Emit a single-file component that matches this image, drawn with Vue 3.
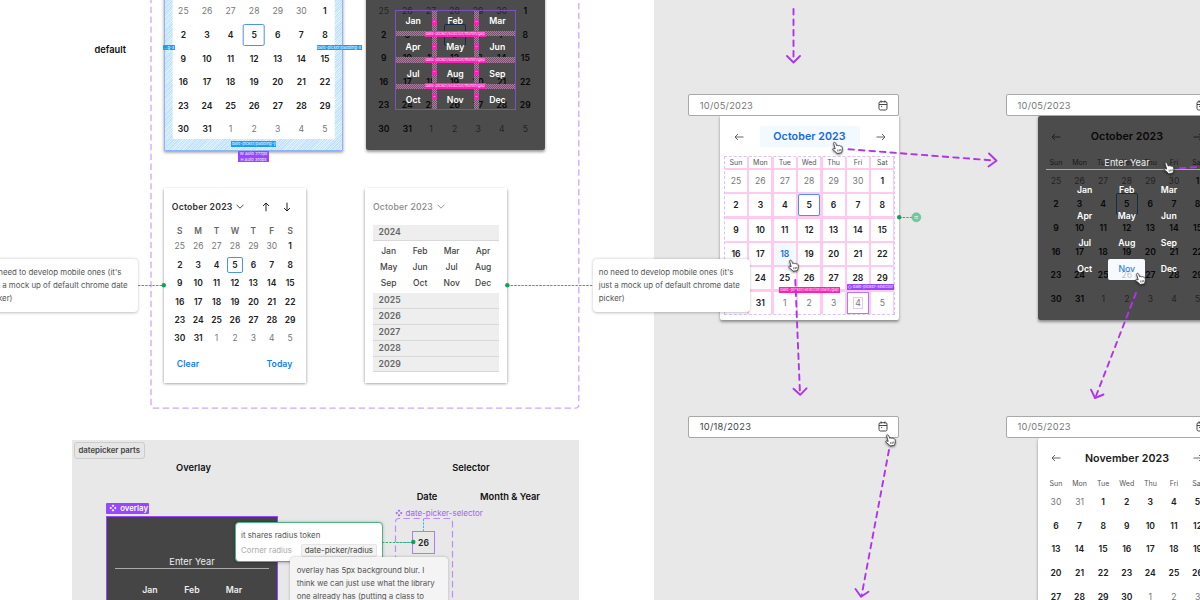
<script setup>
const dayNames = ['Sun', 'Mon', 'Tue', 'Wed', 'Thu', 'Fri', 'Sat']
const letters = ['S', 'M', 'T', 'W', 'T', 'F', 'S']
const months = ['Jan', 'Feb', 'Mar', 'Apr', 'May', 'Jun', 'Jul', 'Aug', 'Sep', 'Oct', 'Nov', 'Dec']

function buildDays(prevStart, prevEnd, last) {
  const days = []
  for (let n = prevStart; n <= prevEnd; n++) days.push({ n, out: true })
  for (let n = 1; n <= last; n++) days.push({ n, out: false })
  for (let n = 1; days.length < 42; n++) days.push({ n, out: true })
  return days
}
const october = buildDays(25, 30, 31)
const november = buildDays(30, 31, 30)

const calendars = [
  { id: 'spaced', days: october, today: 5 },
  { id: 'months', days: october, today: 5, overlay: true, measured: true },
  { id: 'gaps', title: 'October 2023', days: october, today: 5, hover: 18 },
  { id: 'year', title: 'October 2023', days: october, today: 5, overlay: true, enterYear: true },
  { id: 'next', title: 'November 2023', days: november },
]
const inputs = [
  { id: 'in-a', text: '10/05/2023' },
  { id: 'in-b', text: '10/05/2023' },
  { id: 'in-c', text: '10/18/2023', filled: true },
  { id: 'in-d', text: '10/05/2023' },
]
const years = ['2025', '2026', '2027', '2028', '2029']

const arrows = [
  { line: 'M793.5 9V61', head: 'M787 56L793.5 62.5L800 56' },
  { line: 'M848.5 149.2L994 160.5', head: 'M989 153.5L996.5 160.8L988.5 166.5' },
  { line: 'M795.3 280L800 394', head: 'M793.5 388.7L800.2 394.8L806.5 388.3' },
  { line: 'M1136 293L1096 396', head: 'M1091 389.7L1095 398L1103.5 394.5' },
  { line: 'M889 450L861.5 596', head: 'M855.5 589L861 596.7L868.5 591.7' },
  { line: 'M1180 168.3L1204 166.5', head: '' },
]
const cursors = [[832, 141.5], [788, 259.3], [1163.5, 161.7], [1135, 272.5], [885, 434]]
</script>

<template>
  <main class="canvas">
    <div class="board"></div>

    <svg class="layer" viewBox="0 0 1200 600">
      <path class="frame-line" d="M151 -3V404.500Q151 408.200 155 408.200H575Q578.800 408.200 578.800 404.500V-3" />
    </svg>
    <span class="label row-name">default</span>

    <section v-for="c in calendars" :key="c.id" class="calendar" :class="c.id">
      <header v-if="c.title" class="cal-head">
        <svg class="arrow" viewBox="0 0 10 8"><path d="M9.500 4H1M4 1L1 4L4 7" /></svg>
        <strong>{{ c.title }}</strong>
        <svg class="arrow" viewBox="0 0 10 8"><path d="M.5 4H9M6 1L9 4L6 7" /></svg>
      </header>
      <div class="grid">
        <template v-if="c.title">
          <span v-for="d in dayNames" :key="d" class="dow">{{ d }}</span>
        </template>
        <span
          v-for="(d, i) in c.days"
          :key="i"
          class="day"
          :class="{ out: d.out, today: !d.out && d.n === c.today, hover: !d.out && d.n === c.hover, picked: c.id === 'gaps' && i === 40 }"
        ><i>{{ d.n }}</i></span>
      </div>
      <div v-if="c.overlay" class="overlay">
        <div v-if="c.enterYear" class="enter-year">Enter Year</div>
        <div class="month-grid">
          <span v-for="m in months" :key="m" :class="{ chosen: c.enterYear && m === 'Nov' }">
            {{ m }}<em v-if="c.enterYear && m === 'Nov'">26</em>
          </span>
          <template v-if="c.measured">
            <b v-for="n in 2" :key="'c' + n" class="gap-col" :class="'gc' + n"><u v-for="k in 4" :key="k">–</u></b>
            <b v-for="n in 3" :key="'r' + n" class="gap-row" :class="'gr' + n"><u>date-picker/selector/month/gap</u></b>
          </template>
        </div>
      </div>
    </section>

    <span class="tag blue tag-left">...g-x</span>
    <span class="tag blue tag-right">date-picker/padding-x</span>
    <span class="tag blue tag-bottom">date-picker/padding-y</span>
    <span class="tag violet tag-size">W Auto 272px<br />H Auto 310px</span>
    <span class="tag pink tag-gap">date-picker/selector/date/gap</span>
    <span class="tag violet tag-selector">◇ date-picker-selector</span>

    <section class="mobile mobile-days">
      <header>
        <strong>October 2023</strong>
        <svg class="chev" viewBox="0 0 8 5"><path d="M.5 .7L4 4.200L7.500 .7" /></svg>
        <svg class="vert" viewBox="0 0 8 10"><path d="M4 9.300V1M1 4L4 1L7 4" /></svg>
        <svg class="vert" viewBox="0 0 8 10"><path d="M4 .7V9M1 6L4 9L7 6" /></svg>
      </header>
      <div class="mgrid">
        <span v-for="(l, i) in letters" :key="l + i" class="letter">{{ l }}</span>
        <span v-for="(d, i) in october" :key="i" :class="{ out: d.out, today: !d.out && d.n === 5 }">{{ d.n }}</span>
      </div>
      <footer><span>Clear</span><span>Today</span></footer>
    </section>

    <section class="mobile mobile-years">
      <header>
        <strong>October 2023</strong>
        <svg class="chev" viewBox="0 0 8 5"><path d="M.5 .7L4 4.200L7.500 .7" /></svg>
      </header>
      <div class="year">2024</div>
      <div class="year-months"><span v-for="m in months" :key="m">{{ m }}</span></div>
      <div v-for="y in years" :key="y" class="year">{{ y }}</div>
    </section>

    <section class="parts"></section>
    <span class="chip">datepicker parts</span>
    <span class="label l-overlay">Overlay</span>
    <span class="label l-selector">Selector</span>
    <span class="label l-date">Date</span>
    <span class="label l-month">Month &amp; Year</span>

    <span class="component-tag">
      <svg viewBox="0 0 10 10"><path d="M5 .5L6.700 2.200L5 3.900L3.300 2.200ZM5 6.100L6.700 7.800L5 9.500L3.300 7.800ZM2.200 3.300L3.900 5L2.200 6.700L.5 5ZM7.800 3.300L9.500 5L7.800 6.700L6.100 5Z" /></svg>overlay
    </span>
    <div class="part-overlay">
      <div class="enter-year">Enter Year</div>
      <div class="part-months"><span>Jan</span><span>Feb</span><span>Mar</span></div>
    </div>
    <span class="component-tag plain">
      <svg viewBox="0 0 10 10"><path d="M5 .5L6.700 2.200L5 3.900L3.300 2.200ZM5 6.100L6.700 7.800L5 9.500L3.300 7.800ZM2.200 3.300L3.900 5L2.200 6.700L.5 5ZM7.800 3.300L9.500 5L7.800 6.700L6.100 5Z" /></svg>date-picker-selector
    </span>
    <svg class="layer" viewBox="0 0 1200 600">
      <path class="set-line" d="M395.500 602V522Q395.500 518.500 399 518.500H449Q452.500 518.500 452.500 522V602" />
      <path class="cyan-line" d="M423.500 519V531M396 542.500H413" />
      <path class="green-line" d="M382 542.500H413M138 285.500H164M507 285.500H593M899 217.500H912" />
      <circle cx="163.800" cy="285.200" r="2.200" class="dot" />
      <circle cx="507.300" cy="285.200" r="2.200" class="dot" />
      <circle cx="899.200" cy="217.300" r="2.200" class="dot" />
    </svg>
    <div class="selector-cell">26</div>
    <svg class="layer" viewBox="0 0 1200 600">
      <circle cx="413.300" cy="542" r="2.200" class="dot" />
      <circle cx="916.300" cy="217.300" r="4.500" class="bubble" />
      <path class="bubble-mark" d="M914.500 216.500H918.100M914.500 218.200H918.100" />
    </svg>

    <aside class="note radius-note">
      <p>it shares radius token</p>
      <p class="token"><span>Corner radius</span><b>date-picker/radius</b></p>
    </aside>
    <aside class="note blur-note">overlay has 5px background blur. I<br />think we can just use what the library<br />one already has (putting a class to</aside>

    <div v-for="f in inputs" :key="f.id" class="input" :class="[f.id, { filled: f.filled }]">
      <span>{{ f.text }}</span>
      <svg viewBox="0 0 10 11"><path d="M1 3.200Q1 1.700 2.500 1.700H7.500Q9 1.700 9 3.200V8.400Q9 10 7.500 10H2.500Q1 10 1 8.400ZM1 4.500H9M3.100 .4V2.600M6.900 .4V2.600M3 6.400H4.200" /></svg>
    </div>

    <svg class="layer" viewBox="0 0 1200 600">
      <g v-for="(a, i) in arrows" :key="i" class="flow">
        <path class="flow-line" :d="a.line" /><path :d="a.head" />
      </g>
    </svg>

    <aside class="note mobile-note note-a">no need to develop mobile ones (it's<br />just a mock up of default chrome date<br />picker)</aside>
    <aside class="note mobile-note note-b">no need to develop mobile ones (it's<br />just a mock up of default chrome date<br />picker)</aside>

    <svg class="layer" viewBox="0 0 1200 600">
      <g v-for="(p, i) in cursors" :key="i" class="hand" :transform="`translate(${p[0]} ${p[1]})`">
        <path d="M1.600 1.800Q1.700 .6 2.800 .9Q3.500 1.100 3.900 2.300L4.700 4.300Q5.700 3.500 6.500 4.300Q7.700 3.700 8.300 4.600Q9.500 4.200 10 5.300Q10.700 7.500 10.100 9.300L9.300 11.300L5 12L3.800 10.400L.9 8.300Q.2 7.300 1.300 6.900L3.200 7.400Z" />
        <path class="knuckle" d="M5.600 8.100L5.900 10M7.200 7.800L7.400 9.700M8.700 7.600L8.700 9.300" />
      </g>
    </svg>
  </main>
</template>

<style>
html, body { margin: 0; overflow: hidden; }
</style>

<style scoped>
.canvas {
  position: relative; width: 1200px; height: 600px; overflow: hidden; background: #fff;
  font-family: Inter, "Liberation Sans", sans-serif; color: #202020;
}
.canvas, .canvas * { box-sizing: border-box; }
.canvas p { margin: 0; }
.layer { position: absolute; inset: 0; width: 1200px; height: 600px; fill: none; pointer-events: none; }
.board { position: absolute; left: 653.5px; top: 0; right: 0; bottom: 0; background: #e8e8e8; }
.parts { position: absolute; left: 72px; top: 439.500px; width: 507px; bottom: 0; background: #e8e8e8; }
.frame-line { stroke: #cda6ff; stroke-width: 1.300; stroke-dasharray: 6.300 3.500; }
.set-line { stroke: #bd8cfb; stroke-width: 1.200; stroke-dasharray: 6.500 3.500; }
.cyan-line { stroke: #41b5e8; stroke-width: 1; stroke-dasharray: 2.200 1.200; }
.green-line { stroke: #38ab73; stroke-width: 1; stroke-dasharray: 2.400 1.200; }
.dot { fill: #0fa359; }
.bubble { fill: #73c8a0; stroke: #5bbd8e; stroke-width: .6; }
.bubble-mark { stroke: #e9f7f0; stroke-width: .8; }
.flow { stroke: #b034ec; stroke-width: 1.900; stroke-linecap: round; stroke-linejoin: round; }
.flow-line { stroke-dasharray: 5.500 5; }
.hand { fill: #fff; stroke: #333; stroke-width: .8; filter: drop-shadow(0 1.200px 1px rgba(0, 0, 0, .5)); }
.knuckle { fill: none; stroke-width: .7; }

.label { position: absolute; transform: translate(-50%, -50%); font-size: 9.300px; line-height: 12px; font-weight: 600; color: #111; white-space: nowrap; }
.row-name { left: 110.300px; top: 49.500px; }
.l-overlay { left: 193.500px; top: 468px; }
.l-selector { left: 471px; top: 468px; }
.l-date { left: 427px; top: 497px; }
.l-month { left: 510px; top: 497px; }

.calendar { position: absolute; width: 179px; background: #fff; border-radius: 2px; box-shadow: 0 1.500px 3px rgba(0, 0, 0, .4); }
.grid { display: grid; grid-template-columns: repeat(7, 22px); column-gap: 1.600px; row-gap: 1.600px; }
.day { display: flex; align-items: center; justify-content: center; height: 22px; font-size: 8.600px; font-weight: 600; color: #202020; letter-spacing: .05px; border-radius: 2px; }
.day i { font-style: normal; }
.day.out { font-weight: 400; color: #777; }
.today { border: 1px solid #4a92ee; }
.dow { height: 10.500px; font-size: 7px; line-height: 10.500px; text-align: center; color: #555; }
.cal-head { height: 41px; display: flex; align-items: center; justify-content: space-between; padding: 0 13.500px; }
.cal-head strong { font-size: 10.700px; font-weight: 600; letter-spacing: .05px; }
.arrow { width: 10px; height: 8px; fill: none; stroke: #555; stroke-width: .9; }

.spaced { left: 164.300px; top: -53px; height: 203.500px; padding: 52.400px 8px 12px; border: 1px solid #8fb4f7; border-radius: 0; background: repeating-linear-gradient(135deg, #e1f2ff 0 .9px, #bfe1ff .9px 1.800px); }
.spaced .grid { background: #fff; width: 162.500px; height: 139px; margin-left: -.6px; align-content: start; padding-left: 0; column-gap: 1.600px; transform: translateX(-.3px); }
.months { left: 365.600px; top: -53px; width: 179.200px; height: 203px; padding: 53px 6.500px 0 7.200px; }
.gaps { left: 720px; top: 116px; height: 203.500px; padding: 0 5px; border-radius: 0 0 2px 2px; }
.gaps .cal-head { padding: 0 8.500px; }
.gaps .cal-head strong { width: 100px; height: 21px; line-height: 21px; text-align: center; background: #f2f9ff; color: #1769e0; border-radius: 2px; }
.gaps .grid { width: 168.500px; gap: 2.400px; outline: .5px dashed #d9c2fb; background: #ffc9f0; }
.gaps .dow, .gaps .day { background: #fff; border-radius: 0; }
.gaps .dow { line-height: 11.500px; }
.gaps .day.today { border-radius: 2px; }
.gaps .day.hover { background: #f2f9ff; color: #1769e0; }
.gaps .day.picked { border: 1px solid #b179f7; }
.gaps .picked i { border: .5px solid #e0cdfb; padding: 0 1px; }
.year, .next { left: 1037.500px; }
.calendar.year { top: 116px; height: 203.500px; }
.calendar.next { top: 437.500px; height: 203.500px; }
.calendar.year .grid, .next .grid { padding: .7px 7.500px 0; }

.overlay { position: absolute; inset: 0; background: rgba(0, 0, 0, .7); border-radius: 2px; }
.enter-year { color: #eee; font-size: 9.200px; line-height: 13px; text-align: center; border-bottom: 1px solid #aaa; letter-spacing: .05px; }
.year .enter-year { margin: 40px 8px 0; height: 13.500px; }
.month-grid { position: relative; display: grid; width: 121px; grid-template-columns: repeat(3, 36.800px); column-gap: 5.300px; row-gap: 5.300px; }
.month-grid > span { position: relative; height: 21px; line-height: 21px; text-align: center; font-size: 8.700px; font-weight: 600; color: #fff; border-radius: 2px; }
.month-grid > .chosen { color: #2f80ed; background: #f6faff; font-weight: 500; }
.chosen em { position: absolute; left: 0; right: 0; top: 5.500px; font-style: normal; color: rgba(0, 0, 0, .22); }
.year .month-grid { margin: 10.700px 0 0 28.800px; }
.months .month-grid { margin: 63px 0 0 29.200px; }
.months .month-grid > span { line-height: 22.400px; }
.months .month-grid::after { content: ""; position: absolute; inset: 0; border: 1px solid #7d4fc0; }
.gap-col, .gap-row { position: absolute; background: repeating-conic-gradient(#b278a2 0 25%, #6d5268 0 50%) 0 0 / 2px 2px; }
.gap-col { top: 0; bottom: 0; width: 5.500px; }
.gc1 { left: 36.800px; }
.gc2 { left: 78.900px; }
.gap-row { left: 0; right: 0; height: 5.300px; display: flex; justify-content: center; align-items: center; }
.gr1 { top: 21px; }
.gr2 { top: 47.300px; }
.gr3 { top: 73.600px; }
.gap-col { display: flex; flex-direction: column; justify-content: space-around; align-items: center; }
.gap-col u { width: 5.500px; height: 6px; background: #fb21b8; color: #ffc4ed; font-size: 4px; line-height: 5px; text-align: center; text-decoration: none; }
.gap-row u { background: #fb21b8; color: #ffd6f2; font-size: 3.900px; line-height: 6px; padding: 0 1px; text-decoration: none; font-weight: 500; white-space: nowrap; }

.tag { position: absolute; font-size: 4.100px; line-height: 5.800px; text-align: center; white-space: nowrap; font-weight: 500; border-radius: .5px; }
.blue { background: #1b9cf8; color: #dff1ff; height: 5.800px; }
.violet { background: #9747ff; color: #eee0ff; }
.pink { background: #fb21b8; color: #ffd0f0; }
.tag-left { left: 163px; top: 44.600px; width: 12px; }
.tag-right { left: 316.600px; top: 44.600px; width: 45px; }
.tag-bottom { left: 231.300px; top: 141px; width: 45px; }
.tag-size { left: 238px; top: 151px; width: 31px; height: 11px; line-height: 5.500px; }
.tag-gap { left: 779px; top: 286.700px; width: 61px; height: 6px; }
.tag-selector { left: 847px; top: 284.300px; width: 46.500px; height: 6px; font-size: 4.100px; }

.mobile { position: absolute; top: 188px; width: 142.500px; height: 194.500px; background: #fff; box-shadow: 0 1.300px 3px rgba(0, 0, 0, .45); }
.mobile header { display: flex; align-items: center; height: 37px; padding-left: 8px; }
.mobile strong { font-size: 8.700px; font-weight: 600; letter-spacing: .2px; color: #333; }
.chev { width: 8px; height: 5px; margin-left: 3.500px; fill: none; stroke: #333; stroke-width: .9; }
.vert { width: 8px; height: 10px; margin-left: 18.300px; fill: none; stroke: #222; stroke-width: 1; }
.vert + .vert { margin-left: 13px; }
.mobile-days { left: 163.800px; }
.mobile-years { left: 364.900px; }
.mgrid { display: grid; grid-template-columns: repeat(7, 16px); gap: 2.400px; padding: .3px 0 0 8px; }
.mgrid span { height: 16px; display: flex; align-items: center; justify-content: center; font-size: 8.500px; font-weight: 600; border-radius: 2px; }
.mgrid .letter { height: 10.700px; color: #666; font-size: 8.300px; }
.mgrid .out { font-weight: 400; color: #777; }
.mobile footer { display: flex; justify-content: space-between; padding: 12px 14px 0 13px; color: #137fed; font-size: 8.700px; line-height: 12px; font-weight: 600; }
.mobile-years strong { font-weight: 500; color: #888; }
.mobile-years .chev { stroke: #888; }
.mobile-years .year { position: static; margin: 0 8.300px 0 8px; height: 15.800px; padding-left: 5.500px; line-height: 15.600px; background: #eee; border-bottom: 1px solid #d8d8d8; font-size: 8.700px; font-weight: 600; color: #666; letter-spacing: .1px; }
.year-months { display: grid; grid-template-columns: repeat(4, 31.500px); grid-auto-rows: 15.800px; margin: 3.500px 8px 1.700px; text-align: center; line-height: 15.800px; font-size: 8.500px; font-weight: 500; color: #444; }

.chip { position: absolute; left: 74px; top: 441.500px; width: 70.500px; height: 17px; border: 1px solid #ccc; border-radius: 3px; background: #e6e6e6; font-size: 7.800px; line-height: 15px; font-weight: 600; text-align: center; color: #444; white-space: nowrap; }
.component-tag { position: absolute; left: 106.200px; top: 502.500px; width: 42.500px; height: 11.500px; padding-left: 3px; display: flex; align-items: center; gap: 3px; font-size: 7.800px; font-weight: 600; color: #fff; background: #9747ff; border-radius: 1px; white-space: nowrap; }
.component-tag svg { width: 8px; height: 8px; fill: currentColor; flex: none; }
.component-tag.plain { left: 395px; top: 507px; width: auto; padding: 0; gap: 2.500px; background: none; color: #a361f5; font-weight: 400; font-size: 8px; }
.part-overlay { position: absolute; left: 106px; top: 516.300px; width: 172px; bottom: -20px; border: 1.500px solid #9747ff; background: #454545; padding: 37.500px 8px 0; }
.part-overlay .enter-year { height: 14px; }
.part-months { display: grid; grid-template-columns: repeat(3, 42px); justify-content: center; padding-top: 15px; text-align: center; font-size: 8.700px; line-height: 12px; font-weight: 600; color: #eee; }
.selector-cell { position: absolute; left: 412px; top: 530.500px; width: 23px; height: 23px; border: 1px solid #b27bf6; text-align: center; line-height: 22px; font-size: 8.600px; font-weight: 600; }

.note { position: absolute; font-size: 7.860px; line-height: 13.200px; color: #555; white-space: nowrap; background: #fff; border-radius: 4px; box-shadow: 0 .5px 3px rgba(0, 0, 0, .25); }
.mobile-note { top: 259px; width: 157.500px; height: 53px; padding: 6.500px 6px; }
.note-a { left: -19.300px; }
.note-b { left: 592.800px; }
.radius-note { left: 235px; top: 522px; width: 147.500px; height: 39.700px; border: 1.200px solid #4cb283; padding: 6px 5px 0; }
.token { display: flex; justify-content: space-between; align-items: center; color: #aaa; padding-top: 1.500px; }
.token b { font-weight: 400; color: #444; background: #f3f3f3; border: 1px solid #e5e5e5; border-radius: 2px; line-height: 10.500px; padding: 0 2.500px; }
.blur-note { left: 290.200px; top: 556.700px; width: 158px; height: 70px; padding: 7.300px 6.500px; background: #f4f4f4; }

.input { position: absolute; width: 210.500px; height: 21.500px; display: flex; align-items: center; justify-content: space-between; padding: 0 10px 0 10.500px; background: #fff; border: 1px solid #a9a9a9; border-radius: 2px; font-size: 9.300px; letter-spacing: .25px; color: #777; }
.input svg { width: 10px; height: 11px; fill: none; stroke: #333; stroke-width: .9; }
.filled { color: #444; }
.in-a { left: 688.300px; top: 94.300px; }
.in-b { left: 1006px; top: 94.300px; }
.in-c { left: 688.300px; top: 416px; }
.in-d { left: 1006px; top: 416px; }
</style>
